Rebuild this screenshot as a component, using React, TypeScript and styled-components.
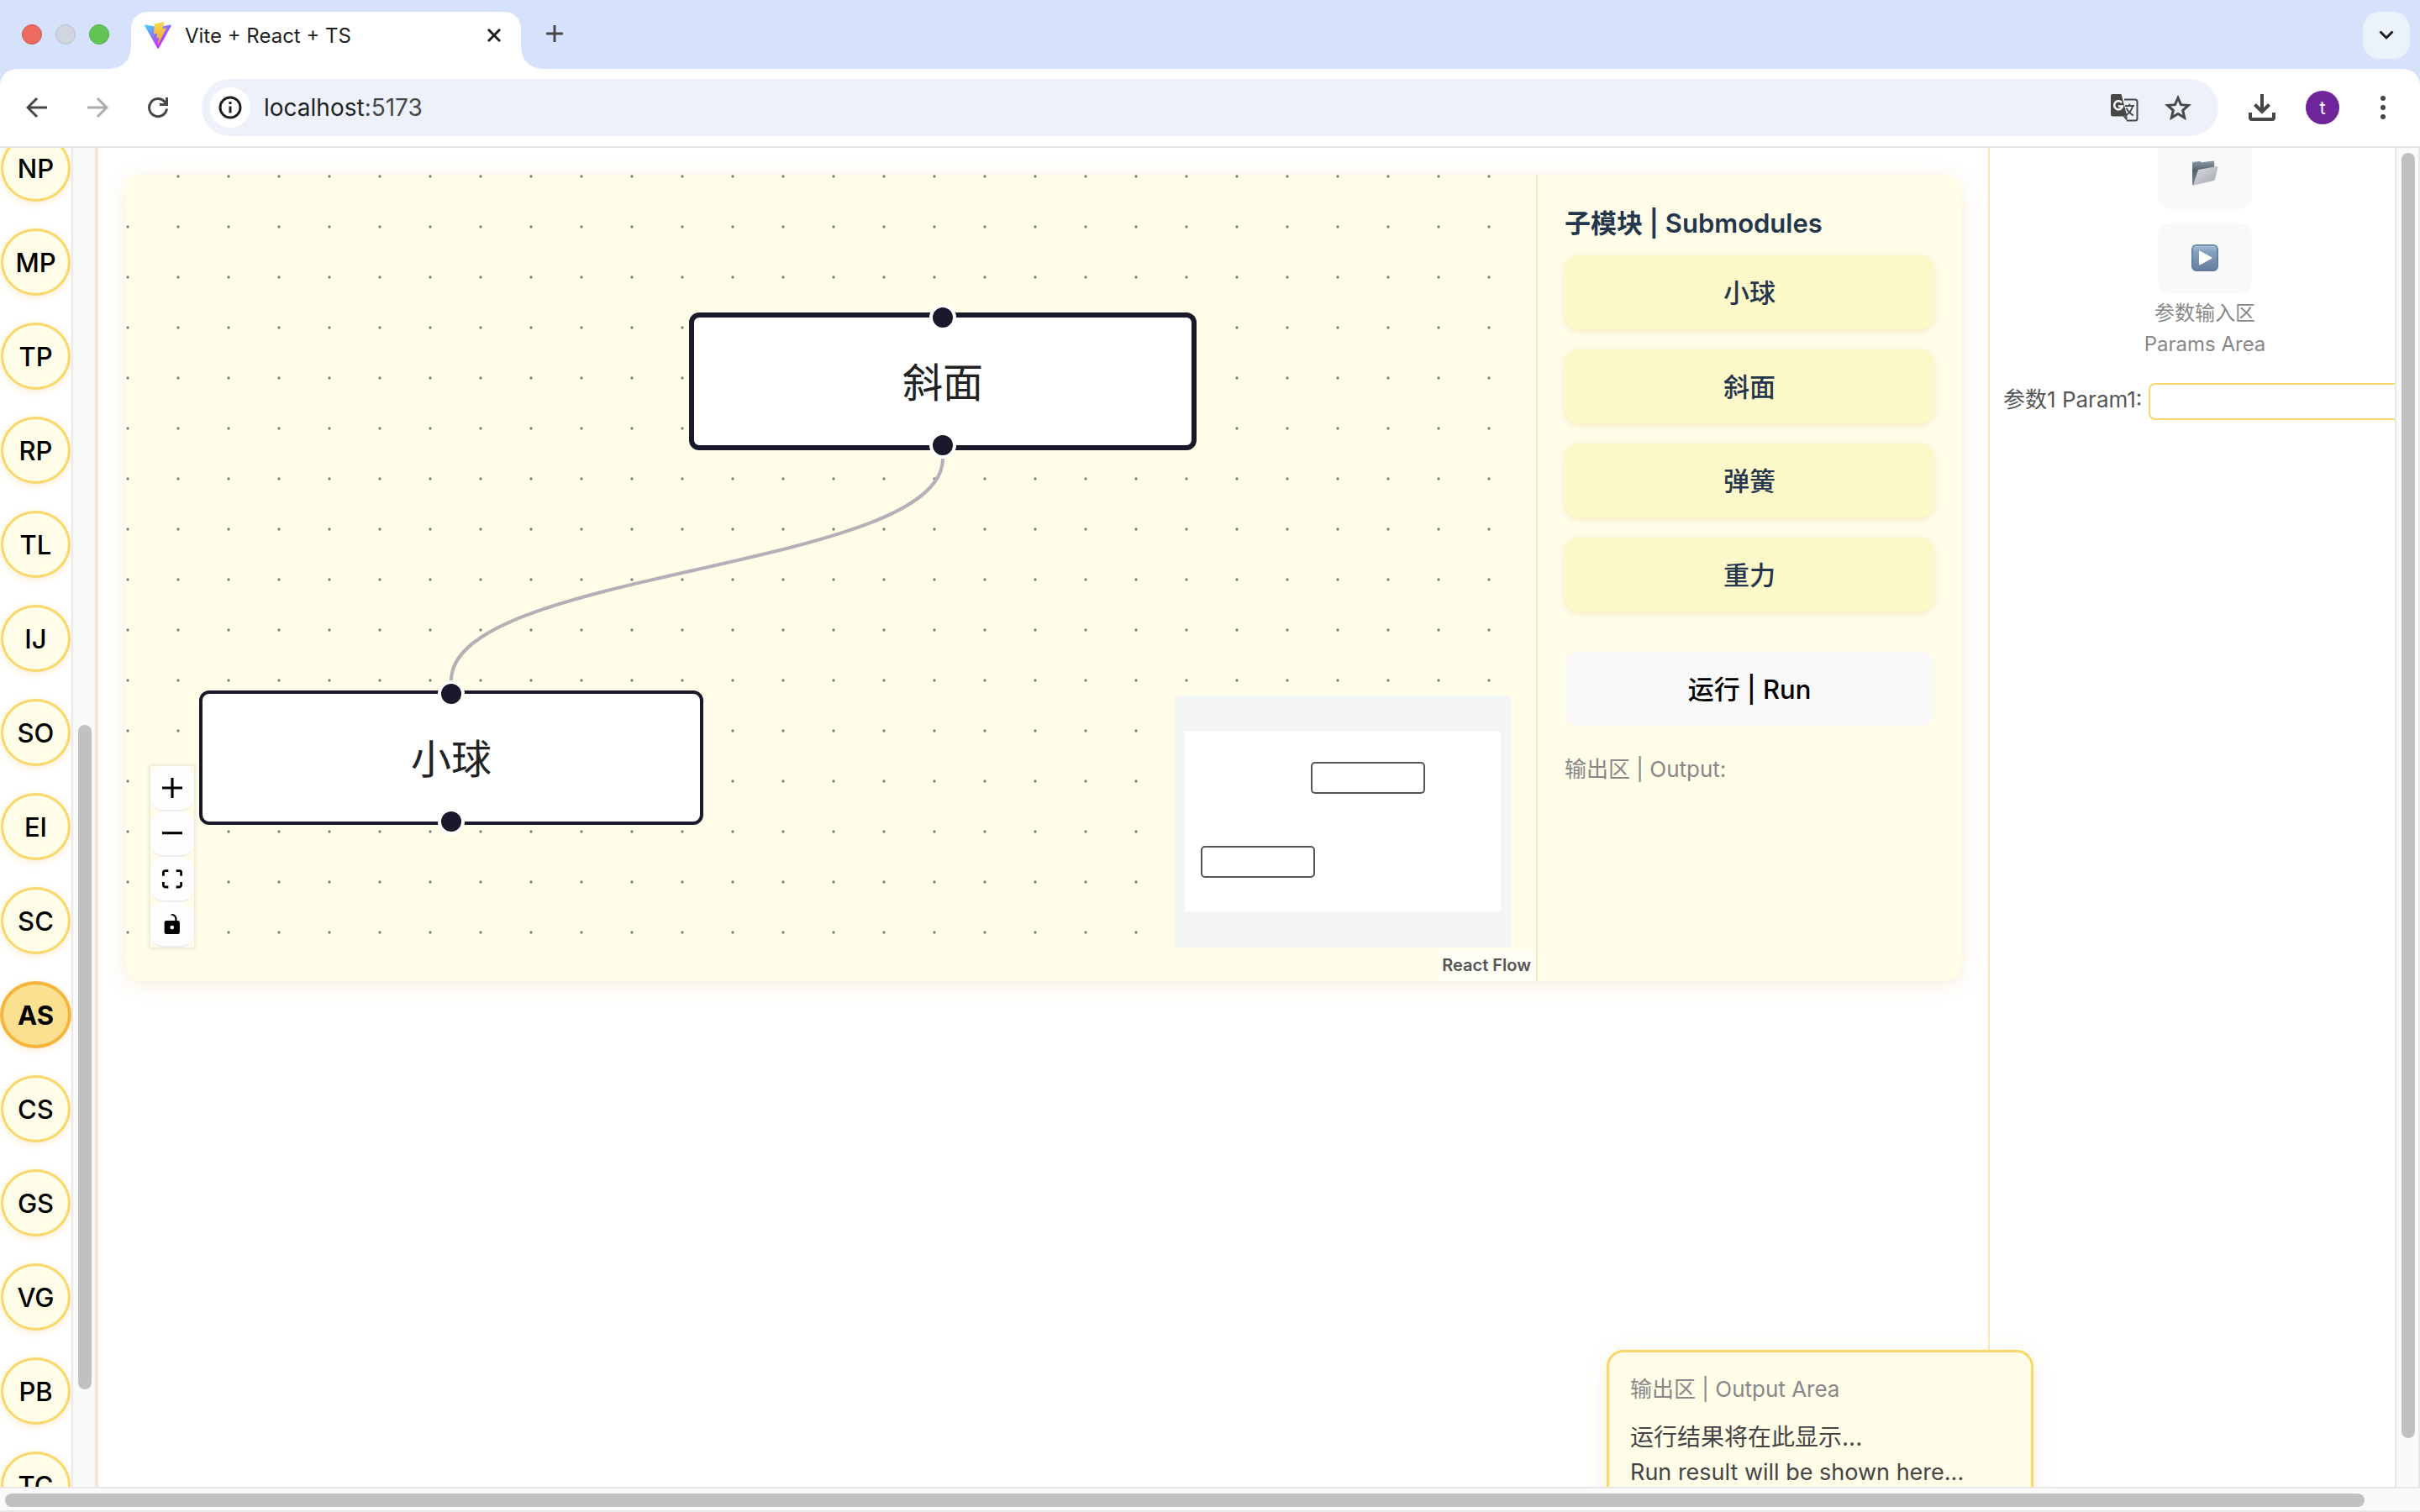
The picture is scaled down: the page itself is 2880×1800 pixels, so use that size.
import React from 'react';
import styled, { createGlobalStyle, css } from 'styled-components';

const Global = createGlobalStyle`
  *, *::before, *::after { box-sizing: border-box; }
  html, body, #root { height: 100%; }
  body { margin: 0; overflow: hidden; background: #fff; }
  body, button, input {
    font-family: Inter, "Noto Sans CJK SC", "Liberation Sans", sans-serif;
  }
  button { border: 0; padding: 0; background: none; color: inherit; cursor: pointer; }
  svg { display: block; flex: none; }
`;

const Window = styled.div`
  display: flex;
  flex-direction: column;
  height: 100vh;
`;

/* ---------- browser chrome ---------- */

const TabStrip = styled.header`
  display: flex;
  height: 82px;
  padding: 0 12px 0 26px;
  background: #d6e1fc;
`;

const Lights = styled.div`
  display: flex;
  align-items: center;
  gap: 16px;
  width: 130px;
`;

const Light = styled.span<{ $fill: string; $edge: string }>`
  width: 24px;
  height: 24px;
  border-radius: 50%;
  background: ${(p) => p.$fill};
  border: 1px solid ${(p) => p.$edge};
`;

const Tab = styled.div`
  position: relative;
  display: flex;
  align-items: center;
  gap: 16px;
  width: 464px;
  margin-top: 14px;
  padding: 0 24px 12px 16px;
  border-radius: 20px 20px 0 0;
  background: #fff;
  color: #1f1f1f;
  font-size: 24px;

  &::before, &::after {
    content: '';
    position: absolute;
    bottom: 0;
    width: 24px;
    height: 24px;
  }
  &::before { right: 100%; background: radial-gradient(circle at 0 0, transparent 23px, #fff 24px); }
  &::after { left: 100%; background: radial-gradient(circle at 100% 0, transparent 23px, #fff 24px); }
`;

const TabTitle = styled.span`
  flex: 1;
  white-space: nowrap;
`;

const NewTab = styled.button`
  width: 56px;
  margin: 12px 0 14px 12px;
  display: grid;
  place-items: center;
  color: #474747;
`;

const TabSearch = styled.button`
  display: grid;
  place-items: center;
  width: 56px;
  height: 56px;
  margin: 14px 0 0 auto;
  border-radius: 20px;
  background: #ebf2fc;
  color: #1f1f1f;
`;

const ToolbarBack = styled.div`
  background: #d6e1fc;
`;

const Toolbar = styled.nav`
  display: flex;
  align-items: center;
  height: 94px;
  padding: 12px 24px 12px 8px;
  border-bottom: 2px solid #e1e3e1;
  border-radius: 20px 20px 0 0;
  background: #fff;
  color: #474747;
`;

const ToolButton = styled.button<{ $muted?: boolean }>`
  display: grid;
  place-items: center;
  width: 72px;
  height: 68px;
  color: ${(p) => (p.$muted ? '#ababab' : '#474747')};
`;

const AddressBar = styled.div`
  display: flex;
  align-items: center;
  flex: 1;
  height: 68px;
  margin: 0 32px 0 16px;
  padding: 0 16px 0 10px;
  border-radius: 34px;
  background: #edf2fa;
`;

const SiteInfo = styled.button`
  display: grid;
  place-items: center;
  width: 48px;
  height: 48px;
  margin-right: 16px;
  border-radius: 50%;
  background: #fff;
  color: #1f1f1f;
`;

const Address = styled.span`
  flex: 1;
  color: #474747;
  font-size: 28px;
  b { font-weight: 400; color: #1f1f1f; }
`;

const AddressAction = styled.button`
  display: grid;
  place-items: center;
  width: 64px;
  height: 64px;
`;

const ToolbarEnd = styled.div`
  display: flex;
  align-items: center;
  gap: 32px;
`;

const BareButton = styled.button`
  display: grid;
  place-items: center;
  width: 40px;
  height: 40px;
`;

const Avatar = styled.button`
  width: 40px;
  height: 40px;
  border-radius: 50%;
  background: #70259b;
  color: #fff;
  font-size: 22px;
`;

/* ---------- page frame ---------- */

const Body = styled.div`
  display: flex;
  flex: 1;
  min-height: 0;
`;

const Page = styled.div`
  position: relative;
  display: flex;
  flex: 1;
  min-width: 0;
  overflow: hidden;
`;

const VTrack = styled.div`
  width: 30px;
  padding: 6px 4px 58px 6px;
  border: solid #e8e8e8;
  border-width: 0 2px;
  background: #fafafa;
`;

const HTrack = styled.div`
  height: 30px;
  padding: 6px 66px 4px 6px;
  border: solid #e8e8e8;
  border-width: 2px 0;
  background: #fafafa;
`;

const Thumb = styled.div`
  width: 100%;
  height: 100%;
  border-radius: 8px;
  background: #c1c1c1;
`;

/* ---------- left rail ---------- */

const Rail = styled.aside`
  display: flex;
  flex: none;
  border-right: 2px solid #f8e9bd;
`;

const RailList = styled.div`
  display: flex;
  flex-direction: column;
  align-items: center;
  gap: 32px;
  width: 85px;
  margin-top: -16px;
`;

const RailItem = styled.button<{ $active?: boolean }>`
  flex: none;
  width: 83px;
  height: 80px;
  border: 3px solid #f9d768;
  border-radius: 50%;
  background: #fffce8;
  box-shadow: 0 2px 8px rgba(244, 177, 58, 0.25);
  color: #000;
  font-size: 31px;
  font-weight: 500;
  ${(p) =>
    p.$active &&
    css`
      width: 85px;
      border: 4px solid #f5b53d;
      background: #fae08e;
      font-weight: 700;
    `}
`;

const RailTrack = styled(VTrack)`
  padding-top: 687px;
  padding-bottom: 116px;
`;

/* ---------- workspace ---------- */

const Main = styled.main`
  flex: 1;
  min-width: 0;
  padding: 32px;
`;

const Card = styled.section`
  display: flex;
  height: 960px;
  border-radius: 20px;
  background: #fffce8;
  box-shadow: 0 4px 24px rgba(225, 190, 100, 0.24);
`;

const Canvas = styled.div`
  position: relative;
  flex: 1;
  min-width: 0;
  overflow: hidden;
  border-radius: 20px 0 0 20px;
`;

const Layer = styled.svg`
  position: absolute;
  inset: 0;
  width: 100%;
  height: 100%;
`;

const FlowNode = styled.div<{ $x: number; $y: number; $selected?: boolean }>`
  position: absolute;
  left: ${(p) => p.$x}px;
  top: ${(p) => p.$y}px;
  display: grid;
  place-items: center;
  width: ${(p) => (p.$selected ? 604 : 600)}px;
  height: ${(p) => (p.$selected ? 164 : 160)}px;
  padding-bottom: 4px;
  border: ${(p) => (p.$selected ? 6 : 4)}px solid #1a192b;
  border-radius: 12px;
  background: #fff;
  color: #222;
  font-size: 48px;
`;

const Handle = styled.span<{ $side: 'top' | 'bottom' }>`
  position: absolute;
  left: 50%;
  ${(p) => p.$side}: -16px;
  width: 32px;
  height: 32px;
  margin-left: -16px;
  border: 4px solid #fff;
  border-radius: 50%;
  background: #1a192b;
`;

const Controls = styled.div`
  position: absolute;
  left: 30px;
  bottom: 40px;
  display: flex;
  flex-direction: column;
  box-shadow: 0 0 4px 2px rgba(0, 0, 0, 0.08);
`;

const ControlButton = styled.button`
  display: grid;
  place-items: center;
  width: 52px;
  height: 54px;
  border-bottom: 2px solid #eee;
  border-radius: 16px;
  background: #fefefe;
  color: #000;
`;

const MiniMap = styled.div`
  position: absolute;
  right: 30px;
  bottom: 40px;
`;

const Attribution = styled.a`
  position: absolute;
  right: 0;
  bottom: 0;
  padding: 4px 6px;
  background: rgba(255, 255, 255, 0.5);
  color: #555;
  font-size: 20px;
  font-weight: 600;
  line-height: 30px;
  text-decoration: none;
`;

const Submodules = styled.aside`
  display: flex;
  flex-direction: column;
  width: 506px;
  padding: 32px;
  border-left: 2px solid #f5e8c6;
`;

const SubTitle = styled.h2`
  margin: 0 0 12px;
  color: #24364b;
  font-size: 31px;
  font-weight: 600;
  line-height: 52px;
`;

const SubList = styled.div`
  display: flex;
  flex-direction: column;
  gap: 24px;
`;

const SubButton = styled.button`
  height: 88px;
  padding-bottom: 4px;
  border-radius: 16px;
  background: #fdf8ca;
  box-shadow: 0 2px 6px rgba(225, 190, 100, 0.3);
  color: #24364b;
  font-size: 31px;
  font-weight: 500;
`;

const RunButton = styled.button`
  height: 88px;
  margin-top: 48px;
  padding-bottom: 4px;
  border-radius: 16px;
  background: #f9f9f9;
  color: #000;
  font-size: 31px;
  font-weight: 500;
`;

const Caption = styled.p`
  margin: 0;
  color: #888;
  font-size: 26px;
  line-height: 40px;
`;

const OutputCaption = styled(Caption)`
  margin-top: 32px;
`;

/* ---------- params panel ---------- */

const Params = styled.aside`
  flex: none;
  width: 484px;
  border-left: 2px solid #f8e9bd;
  overflow: hidden;
`;

const ParamsInner = styled.div`
  display: flex;
  flex-direction: column;
  align-items: center;
  width: 512px;
  margin-top: -12px;
`;

const ParamTool = styled.button`
  display: grid;
  place-items: center;
  width: 112px;
  height: 85px;
  margin-bottom: 16px;
  padding-bottom: 2px;
  border-radius: 16px;
  background: #f9f9f9;
`;

const ParamsTitle = styled.p`
  margin: -12px 0 0;
  color: #888;
  font-size: 24px;
  line-height: 37px;
  text-align: center;
`;

const ParamRow = styled.div`
  display: flex;
  align-items: center;
  align-self: stretch;
  gap: 8px;
  margin-top: 28px;
  padding-left: 16px;
`;

const ParamLabel = styled.label`
  padding-bottom: 4px;
  color: #555;
  font-size: 26px;
  line-height: 40px;
  white-space: nowrap;
`;

const ParamInput = styled.input`
  flex: none;
  width: 360px;
  height: 44px;
  border: 2px solid #f9d768;
  border-radius: 8px;
  background: #fff;
  font-size: 26px;
`;

/* ---------- floating output ---------- */

const Output = styled.section`
  position: absolute;
  right: 430px;
  bottom: -77px;
  width: 508px;
  height: 240px;
  padding: 24px 25px;
  border: 3px solid #f9d768;
  border-radius: 20px;
  background: #fffce8;
  box-shadow: 0 4px 24px rgba(225, 190, 100, 0.24);
`;

const OutputBody = styled.div`
  margin-top: 16px;
  color: #444;
  line-height: 42px;
`;

const OutputLine = styled.p<{ $latin?: boolean }>`
  margin: 0;
  font-size: ${(p) => (p.$latin ? 27 : 28)}px;
`;

const stroke = (width: number) => ({
  fill: 'none',
  stroke: 'currentColor',
  strokeWidth: width,
});

const ViteLogo = () => (
  <svg width="32" height="32" viewBox="0 0 256 257">
    <defs>
      <linearGradient id="viteBody" x1="-.8%" x2="57.6%" y1="7.7%" y2="78.4%">
        <stop offset="0%" stopColor="#41D1FF" />
        <stop offset="100%" stopColor="#BD34FE" />
      </linearGradient>
      <linearGradient id="viteBolt" x1="43.4%" x2="50.3%" y1="2.2%" y2="89%">
        <stop offset="0%" stopColor="#F7DC5E" />
        <stop offset="30%" stopColor="#F5CC45" />
        <stop offset="100%" stopColor="#F0A63A" />
      </linearGradient>
    </defs>
    <path fill="url(#viteBody)" d="M255.153 37.938L134.897 252.976c-2.483 4.44-8.862 4.466-11.382.048L.875 37.958c-2.746-4.814 1.371-10.646 6.827-9.67l120.385 21.517a6.537 6.537 0 0 0 2.322-.004l117.867-21.483c5.438-.991 9.574 4.796 6.877 9.62Z" />
    <path fill="url(#viteBolt)" d="M185.432.063L96.44 17.501a3.268 3.268 0 0 0-2.634 3.014l-5.474 92.456a3.268 3.268 0 0 0 3.997 3.378l24.777-5.718c2.318-.535 4.413 1.507 3.936 3.838l-7.361 36.047c-.495 2.426 1.782 4.5 4.151 3.78l15.304-4.649c2.372-.72 4.652 1.36 4.15 3.788l-11.698 56.621c-.732 3.542 3.979 5.473 5.943 2.437l1.313-2.028l72.516-144.72c1.215-2.423-.88-5.186-3.54-4.672l-25.505 4.922c-2.396.462-4.435-1.77-3.759-4.114l16.646-57.705c.677-2.35-1.37-4.583-3.769-4.113Z" />
  </svg>
);

const ArrowIcon = ({ forward }: { forward?: boolean }) => (
  <svg width="26" height="26" viewBox="0 0 26 26" {...stroke(3)}>
    {forward ? <path d="M1 13h22M13 2l11 11-11 11" /> : <path d="M25 13H3M13 2L2 13l11 11" />}
  </svg>
);

const ReloadIcon = () => (
  <svg width="26" height="26" viewBox="0 0 26 26" {...stroke(3)}>
    <path d="M23.500 14.500A10.500 10.500 0 1 1 21 6.200L23.500 8.800M23.500 1v8.500h-8.500" />
  </svg>
);

const InfoIcon = () => (
  <svg width="28" height="28" viewBox="0 0 28 28" {...stroke(3)}>
    <circle cx="14" cy="14" r="12" />
    <path d="M14 12.500v8M14 7v3" />
  </svg>
);

const TranslateIcon = () => (
  <svg width="34" height="34" viewBox="0 0 34 34">
    <path d="M17 7.500h13a2.500 2.500 0 0 1 2.500 2.500v20a2.500 2.500 0 0 1-2.500 2.500H20" fill="none" stroke="#474747" strokeWidth="2" />
    <path d="M3 1h10.500l7 26.500H3.500a2.500 2.500 0 0 1-2.500-2.500V3a2 2 0 0 1 2-2Z" fill="#474747" />
    <path d="M15.500 27.500h5V33Z" fill="#474747" />
    <path d="M14 11.200A5 5 0 1 0 15 15.500h-5" fill="none" stroke="#fff" strokeWidth="2.500" />
    <path d="M18 15h11M23.300 12.500V15M27 15c-1 5-4.500 9-7.500 11M19.500 17.500c2 4 5 7 8.500 9" fill="none" stroke="#474747" strokeWidth="1.800" />
  </svg>
);

const StarIcon = () => (
  <svg width="32" height="32" viewBox="0 0 32 32" {...stroke(3)}>
    <path d="M16 4.500l3.500 8.200 8.900.8-6.700 5.900 2 8.700L16 23.500l-7.700 4.600 2-8.700-6.700-5.900 8.900-.8Z" />
  </svg>
);

const DownloadIcon = () => (
  <svg width="32" height="32" viewBox="0 0 32 32" {...stroke(4)}>
    <path d="M16 0v20M7.500 12.500L16 21l8.500-8.500" />
    <path d="M2 22v6q0 2 2 2h24q2 0 2-2v-6" />
  </svg>
);

const MoreIcon = () => (
  <svg width="8" height="32" viewBox="0 0 8 32" fill="currentColor">
    <circle cx="4" cy="5" r="3" />
    <circle cx="4" cy="16" r="3" />
    <circle cx="4" cy="27" r="3" />
  </svg>
);

const FolderIcon = () => (
  <svg width="32" height="32" viewBox="0 0 32 32">
    <defs>
      <linearGradient id="folderBack" x1="0" y1="0" x2="0" y2="1">
        <stop offset="0" stopColor="#8d9aa5" />
        <stop offset=".4" stopColor="#52626f" />
        <stop offset="1" stopColor="#7c8894" />
      </linearGradient>
      <linearGradient id="folderFront" x1="0" y1="0" x2="1" y2="1">
        <stop offset="0" stopColor="#d9dce0" />
        <stop offset=".5" stopColor="#bfc3c9" />
        <stop offset="1" stopColor="#9fa3ab" />
      </linearGradient>
    </defs>
    <path d="M1 4.500q0-1.500 1.500-1.700l7-.8q1.500 0 2.500 1.200l14-1.700q1.200 0 1.200 1.200V22L2 30.500q-1 0-1-1.500Z" fill="url(#folderBack)" />
    <path d="M7.500 13.500q.4-1.500 2-1.700L30.500 8q1.300-.1 1 1.200L28 23.500q-.3 1.100-1.500 1.400L3.500 30.500q-1.300.2-1-1.200Z" fill="url(#folderFront)" />
  </svg>
);

const PlayIcon = () => (
  <svg width="32" height="32" viewBox="0 0 32 32">
    <defs>
      <linearGradient id="playFace" x1="0" y1="0" x2="0" y2="1">
        <stop offset="0" stopColor="#a9c3dc" />
        <stop offset=".25" stopColor="#83a0c0" />
        <stop offset="1" stopColor="#667d99" />
      </linearGradient>
    </defs>
    <rect x=".8" y=".8" width="30.400" height="30.400" rx="5" fill="url(#playFace)" stroke="#5d7b9c" strokeWidth="1.600" />
    <path d="M9 8.500q0-1.500 1.400-.8l13.600 7.500q1.300.8 0 1.600l-13.600 7.500q-1.400.7-1.400-.8Z" fill="#fff" />
  </svg>
);

const MiniMapDrawing = () => (
  <svg width="400" height="300" viewBox="0 0 400 300">
    <rect width="400" height="300" fill="#f4f6f6" />
    <rect x="12" y="43" width="376" height="214" fill="#fff" />
    <g fill="#fff" stroke="#555" strokeWidth="2">
      <rect x="163" y="80" width="134" height="36" rx="4" />
      <rect x="32" y="180" width="134" height="36" rx="4" />
    </g>
  </svg>
);

const controls = [
  {
    label: 'zoom in',
    icon: <svg width="24" height="24" viewBox="0 0 32 32"><path d="M32 18.133H18.133V32h-4.266V18.133H0v-4.266h13.867V0h4.266v13.867H32z" /></svg>,
  },
  {
    label: 'zoom out',
    icon: <svg width="24" height="4" viewBox="0 0 32 5"><path d="M0 0h32v4.200H0z" /></svg>,
  },
  {
    label: 'fit view',
    icon: <svg width="24" height="23" viewBox="0 0 32 30"><path d="M3.692 4.630c0-.530.400-.938.939-.938h5.215V0H4.708C2.130 0 0 2.054 0 4.630v5.216h3.692V4.631zM27.354 0h-5.200v3.692h5.170c.530 0 .984.400.984.939v5.215H32V4.631A4.624 4.624 0 0 0 27.354 0zm.954 24.830c0 .532-.400.940-.939.940h-5.215v3.768h5.215c2.577 0 4.631-2.130 4.631-4.707v-5.139h-3.692v5.139zm-23.677.940a.919.919 0 0 1-.939-.940v-5.138H0v5.139c0 2.577 2.130 4.707 4.708 4.707h5.138V25.770H4.631z" /></svg>,
  },
  {
    label: 'toggle interactivity',
    icon: <svg width="20" height="24" viewBox="0 0 25 32"><path d="M21.333 10.667H19.810V7.619C19.810 3.429 16.380 0 12.190 0c-4.114 1.828-1.370 2.133.305 2.438 1.676.305 4.420 2.590 4.420 5.181v3.048H3.047A3.056 3.056 0 0 0 0 13.714v15.238A3.056 3.056 0 0 0 3.048 32h18.285a3.056 3.056 0 0 0 3.048-3.048V13.714a3.056 3.056 0 0 0-3.048-3.047zM12.190 24.533a3.056 3.056 0 0 1-3.047-3.047 3.056 3.056 0 0 1 3.047-3.048 3.056 3.056 0 0 1 3.048 3.048 3.056 3.056 0 0 1-3.048 3.047z" /></svg>,
  },
];

const chapters = ['NP', 'MP', 'TP', 'RP', 'TL', 'IJ', 'SO', 'EI', 'SC', 'AS', 'CS', 'GS', 'VG', 'PB', 'TC'];
const submodules = ['小球', '斜面', '弹簧', '重力'];

export default function App() {
  return (
    <Window>
      <Global />
      <TabStrip>
        <Lights>
          <Light $fill="#ec6a5e" $edge="#d55448" />
          <Light $fill="#d0d5e0" $edge="#b9bfcc" />
          <Light $fill="#61c554" $edge="#4fae43" />
        </Lights>
        <Tab>
          <ViteLogo />
          <TabTitle>Vite + React + TS</TabTitle>
          <button aria-label="Close tab">
            <svg width="16" height="16" viewBox="0 0 16 16" {...stroke(3)}>
              <path d="M1 1l14 14M15 1L1 15" />
            </svg>
          </button>
        </Tab>
        <NewTab aria-label="New tab">
          <svg width="20" height="20" viewBox="0 0 20 20" {...stroke(3)}>
            <path d="M10 0v20M0 10h20" />
          </svg>
        </NewTab>
        <TabSearch aria-label="Search tabs">
          <svg width="18" height="12" viewBox="0 0 18 12" {...stroke(3)}>
            <path d="M1.500 1.500L9 9l7.500-7.500" />
          </svg>
        </TabSearch>
      </TabStrip>
      <ToolbarBack>
        <Toolbar>
          <ToolButton aria-label="Back"><ArrowIcon /></ToolButton>
          <ToolButton aria-label="Forward" $muted><ArrowIcon forward /></ToolButton>
          <ToolButton aria-label="Reload"><ReloadIcon /></ToolButton>
          <AddressBar>
            <SiteInfo aria-label="Site information"><InfoIcon /></SiteInfo>
            <Address><b>localhost</b>:5173</Address>
            <AddressAction aria-label="Translate"><TranslateIcon /></AddressAction>
            <AddressAction aria-label="Bookmark"><StarIcon /></AddressAction>
          </AddressBar>
          <ToolbarEnd>
            <BareButton aria-label="Downloads"><DownloadIcon /></BareButton>
            <Avatar>t</Avatar>
            <BareButton aria-label="Menu"><MoreIcon /></BareButton>
          </ToolbarEnd>
        </Toolbar>
      </ToolbarBack>

      <Body>
        <Page>
          <Rail>
            <RailList>
              {chapters.map((name) => (
                <RailItem key={name} $active={name === 'AS'}>{name}</RailItem>
              ))}
            </RailList>
            <RailTrack><Thumb /></RailTrack>
          </Rail>

          <Main>
            <Card>
              <Canvas>
                <Layer>
                  <defs>
                    <pattern id="dots" width="60" height="60" patternUnits="userSpaceOnUse">
                      <circle cx="3" cy="2" r="1.700" fill="#81818a" />
                    </pattern>
                  </defs>
                  <rect width="100%" height="100%" fill="url(#dots)" />
                  <path d="M973 338C973 470 388 470 388 602" fill="none" stroke="#b1b1b7" strokeWidth="4" />
                </Layer>
                <FlowNode $x={671} $y={164} $selected>
                  斜面
                  <Handle $side="top" />
                  <Handle $side="bottom" />
                </FlowNode>
                <FlowNode $x={88} $y={614}>
                  小球
                  <Handle $side="top" />
                  <Handle $side="bottom" />
                </FlowNode>
                <Controls>
                  {controls.map((c) => (
                    <ControlButton key={c.label} aria-label={c.label}>{c.icon}</ControlButton>
                  ))}
                </Controls>
                <MiniMap><MiniMapDrawing /></MiniMap>
                <Attribution href="https://reactflow.dev">React Flow</Attribution>
              </Canvas>
              <Submodules>
                <SubTitle>子模块 | Submodules</SubTitle>
                <SubList>
                  {submodules.map((name) => (
                    <SubButton key={name}>{name}</SubButton>
                  ))}
                </SubList>
                <RunButton>运行 | Run</RunButton>
                <OutputCaption>输出区 | Output:</OutputCaption>
              </Submodules>
            </Card>
          </Main>

          <Params>
            <ParamsInner>
              <ParamTool aria-label="Open"><FolderIcon /></ParamTool>
              <ParamTool aria-label="Run"><PlayIcon /></ParamTool>
              <ParamsTitle>参数输入区<br />Params Area</ParamsTitle>
              <ParamRow>
                <ParamLabel htmlFor="param1">参数1 Param1:</ParamLabel>
                <ParamInput id="param1" type="text" />
              </ParamRow>
            </ParamsInner>
          </Params>

          <Output>
            <Caption>输出区 | Output Area</Caption>
            <OutputBody>
              <OutputLine>运行结果将在此显示...</OutputLine>
              <OutputLine $latin>Run result will be shown here...</OutputLine>
            </OutputBody>
          </Output>
        </Page>
        <VTrack><Thumb /></VTrack>
      </Body>
      <HTrack><Thumb /></HTrack>
    </Window>
  );
}
